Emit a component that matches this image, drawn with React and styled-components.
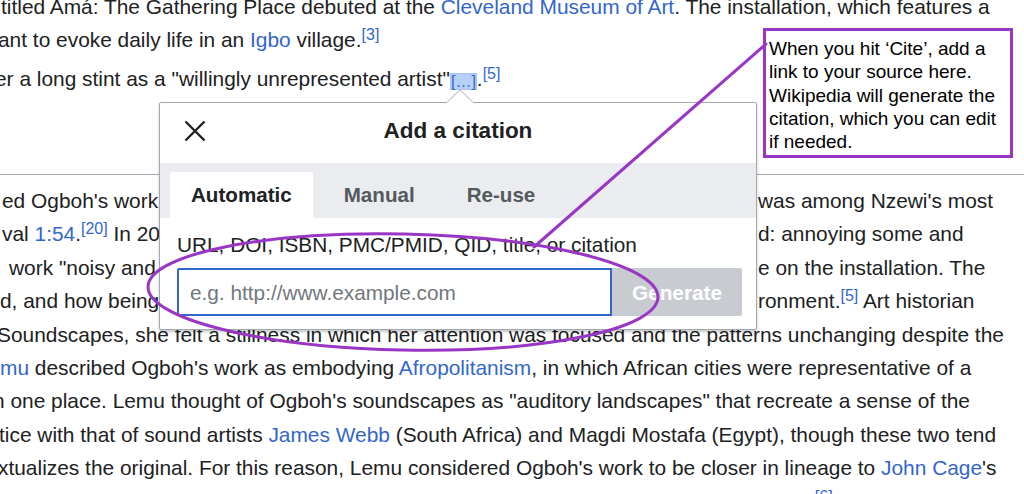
import React from "react";
import styled, { createGlobalStyle } from "styled-components";

const Global = createGlobalStyle`
  html, body { margin: 0; padding: 0; background: #fff; }
  body { font-family: "Liberation Sans", Arial, Helvetica, sans-serif; }
`;

const Page = styled.div`
  position: relative;
  width: 1024px;
  height: 494px;
  overflow: hidden;
  background: #fff;
  color: #202122;
  font-family: "Liberation Sans", Arial, Helvetica, sans-serif;
  font-size: 20.9px;
  line-height: 33.4px;
`;

const Article = styled.div`
  margin-top: -10px;
`;

const Paragraph = styled.div`
  margin-bottom: ${(p) => (p.$gap != null ? p.$gap : 0)}px;
`;

const Line = styled.div`
  white-space: nowrap;
  margin-left: ${(p) => p.$shift || 0}px;
`;

const SplitLine = styled.div`
  display: grid;
  grid-template-columns: 758px 1fr;
  white-space: nowrap;
`;

const Cell = styled.span`
  overflow: hidden;
  min-width: 0;
  padding-left: ${(p) => p.$indent || 0}px;
`;

const Divider = styled.hr`
  border: 0;
  height: 1px;
  background: #a2a9b1;
  margin: 78.8px 0 9px;
`;

const Link = styled.span`
  color: #3366cc;
`;

const Ref = styled.sup`
  font-size: 16px;
  line-height: 0;
  vertical-align: 7.5px;
  color: #3366cc;
`;

const Placeholder = styled.span`
  display: inline-block;
  font-size: 16px;
  line-height: 17px;
  padding: 0 1px;
  vertical-align: -1px;
  color: #3366cc;
  background: #b7d0f7;
  box-shadow: inset 0 0 0 1px #a5c2f1;
`;

/* ---------- dialog ---------- */

const Dialog = styled.div`
  position: absolute;
  left: 159px;
  top: 102px;
  width: 598px;
  box-sizing: border-box;
  background: #fff;
  border: 1px solid #a2a9b1;
  border-radius: 2px;
  box-shadow: 0 2px 3px rgba(0, 0, 0, 0.22);
  display: flex;
  flex-direction: column;
  z-index: 2;
`;

const Pointer = styled.svg`
  position: absolute;
  left: 286px;
  top: -14px;
  width: 28px;
  height: 15px;
  overflow: visible;
`;

const Header = styled.div`
  display: grid;
  grid-template-columns: 70px 1fr 70px;
  align-items: center;
  height: 56px;
  padding-bottom: 4px;
`;

const CloseButton = styled.button`
  display: flex;
  align-items: center;
  justify-content: center;
  background: none;
  border: 0;
  padding: 0;
  width: 70px;
  height: 40px;
  cursor: pointer;
`;

const Title = styled.div`
  text-align: center;
  font-weight: 700;
  font-size: 22.5px;
  line-height: 30px;
  color: #202122;
`;

const TabBar = styled.div`
  display: flex;
  gap: 10px;
  height: 55px;
  box-sizing: border-box;
  padding: 9px 0 0 10px;
  background: #eaecf0;
`;

const Tab = styled.div`
  height: 46px;
  line-height: 46px;
  padding: 0 21px;
  font-weight: 700;
  font-size: 20.6px;
  border-radius: 2px 2px 0 0;
  color: ${(p) => (p.$active ? "#202122" : "#54595d")};
  background: ${(p) => (p.$active ? "#fff" : "transparent")};
`;

const Body = styled.div`
  padding: 10px 14px 13px 17px;
  font-size: 20.8px;
`;

const Label = styled.div`
  line-height: 33.4px;
  color: #202122;
  white-space: nowrap;
`;

const InputRow = styled.div`
  display: flex;
  margin-top: 7px;
  height: 48px;
`;

const Input = styled.div`
  flex: 1;
  box-sizing: border-box;
  border: 2px solid #3366cc;
  border-radius: 2px 0 0 2px;
  padding-left: 11px;
  display: flex;
  align-items: center;
  color: #72777d;
`;

const GenerateButton = styled.div`
  width: 130px;
  display: flex;
  align-items: center;
  justify-content: center;
  background: #c8ccd1;
  color: #fff;
  font-weight: 700;
  border-radius: 0 2px 2px 0;
`;

/* ---------- annotation ---------- */

const Callout = styled.div`
  position: absolute;
  left: 763px;
  top: 28px;
  width: 250px;
  height: 130px;
  box-sizing: border-box;
  border: 3px solid #9a36c4;
  background: #fff;
  padding: 6px 3px 0 3px;
  color: #000;
  font-size: 19px;
  line-height: 23.3px;
  z-index: 3;
`;

const Markup = styled.svg`
  position: absolute;
  left: 0;
  top: 0;
  width: 1024px;
  height: 494px;
  pointer-events: none;
  z-index: 4;
`;

const CloseIcon = () => (
  <svg width="22" height="22" viewBox="0 0 22 22">
    <path d="M1.5 1.5 L20.5 20.5 M20.5 1.5 L1.5 20.5" stroke="#202122" strokeWidth="2.4" fill="none" />
  </svg>
);

export default function App() {
  return (
    <Page>
      <Global />
      <Article>
        <Paragraph $gap={5}>
          <Line $shift={1}>
            titled Amá: The Gathering Place debuted at the <Link>Cleveland Museum of Art</Link>. The installation, which features a
          </Line>
          <Line $shift={-2}>
            ant to evoke daily life in an <Link>Igbo</Link> village.<Ref>[3]</Ref>
          </Line>
        </Paragraph>
        <Paragraph>
          <Line $shift={-5}>
            er a long stint as a "willingly unrepresented artist"<Placeholder>[…]</Placeholder>.<Ref>[5]</Ref>
          </Line>
        </Paragraph>
        <Divider />
        <Paragraph>
          <SplitLine>
            <Cell $indent={2}>ed Ogboh's work in the inaugural edition of the festival</Cell>
            <Cell>was among Nzewi's most</Cell>
          </SplitLine>
          <SplitLine>
            <Cell $indent={2}>
              val <Link>1:54</Link>.<Ref>[20]</Ref> In 2019, critics were divided
            </Cell>
            <Cell>d: annoying some and</Cell>
          </SplitLine>
          <SplitLine>
            <Cell $indent={9}>work "noisy and chaotic" while others wrote at length</Cell>
            <Cell>e on the installation. The</Cell>
          </SplitLine>
          <SplitLine>
            <Cell>d, and how being immersed in it changed the environment</Cell>
            <Cell>ronment.<Ref>[5]</Ref> Art historian</Cell>
          </SplitLine>
          <Line $shift={-3}>
            Soundscapes, she felt a stillness in which her attention was focused and the patterns unchanging despite the
          </Line>
          <Line>
            <Link>mu</Link> described Ogboh's work as embodying <Link>Afropolitanism</Link>, in which African cities were representative of a
          </Line>
          <Line $shift={-7}>
            n one place. Lemu thought of Ogboh's soundscapes as "auditory landscapes" that recreate a sense of the
          </Line>
          <Line $shift={-1}>
            tice with that of sound artists <Link>James Webb</Link> (South Africa) and Magdi Mostafa (Egypt), though these two tend
          </Line>
          <Line $shift={-2}>
            xtualizes the original. For this reason, Lemu considered Ogboh's work to be closer in lineage to <Link>John Cage</Link>'s
          </Line>
          <Line>
            <Link>ian Pierre Schaeffer</Link> and his musique concrète than to other contemporary sound artists.<Ref>[6]</Ref>
          </Line>
        </Paragraph>
      </Article>

      <Dialog>
        <Pointer viewBox="0 0 28 15">
          <polygon points="0,14.5 14,0.5 28,14.5" fill="#fff" />
          <path d="M0.3 14 L14 0.7 L27.7 14" stroke="#a2a9b1" strokeWidth="1" fill="none" />
          <rect x="1" y="13" width="26" height="2" fill="#fff" />
        </Pointer>
        <Header>
          <CloseButton aria-label="Close">
            <CloseIcon />
          </CloseButton>
          <Title>Add a citation</Title>
          <span />
        </Header>
        <TabBar>
          <Tab $active>Automatic</Tab>
          <Tab>Manual</Tab>
          <Tab>Re-use</Tab>
        </TabBar>
        <Body>
          <Label>URL, DOI, ISBN, PMC/PMID, QID, title, or citation</Label>
          <InputRow>
            <Input>e.g. http://www.example.com</Input>
            <GenerateButton>Generate</GenerateButton>
          </InputRow>
        </Body>
      </Dialog>

      <Callout>
        When you hit ‘Cite’, add a
        <br />
        link to your source here.
        <br />
        Wikipedia will generate the
        <br />
        citation, which you can edit
        <br />
        if needed.
      </Callout>

      <Markup viewBox="0 0 1024 494">
        <line x1="766" y1="44" x2="534" y2="247" stroke="#9a36c4" strokeWidth="3" strokeLinecap="round" />
        <ellipse
          cx="403"
          cy="292"
          rx="255"
          ry="58"
          fill="none"
          stroke="#9a36c4"
          strokeWidth="3"
          transform="rotate(1.2 403 292)"
        />
      </Markup>
    </Page>
  );
}
